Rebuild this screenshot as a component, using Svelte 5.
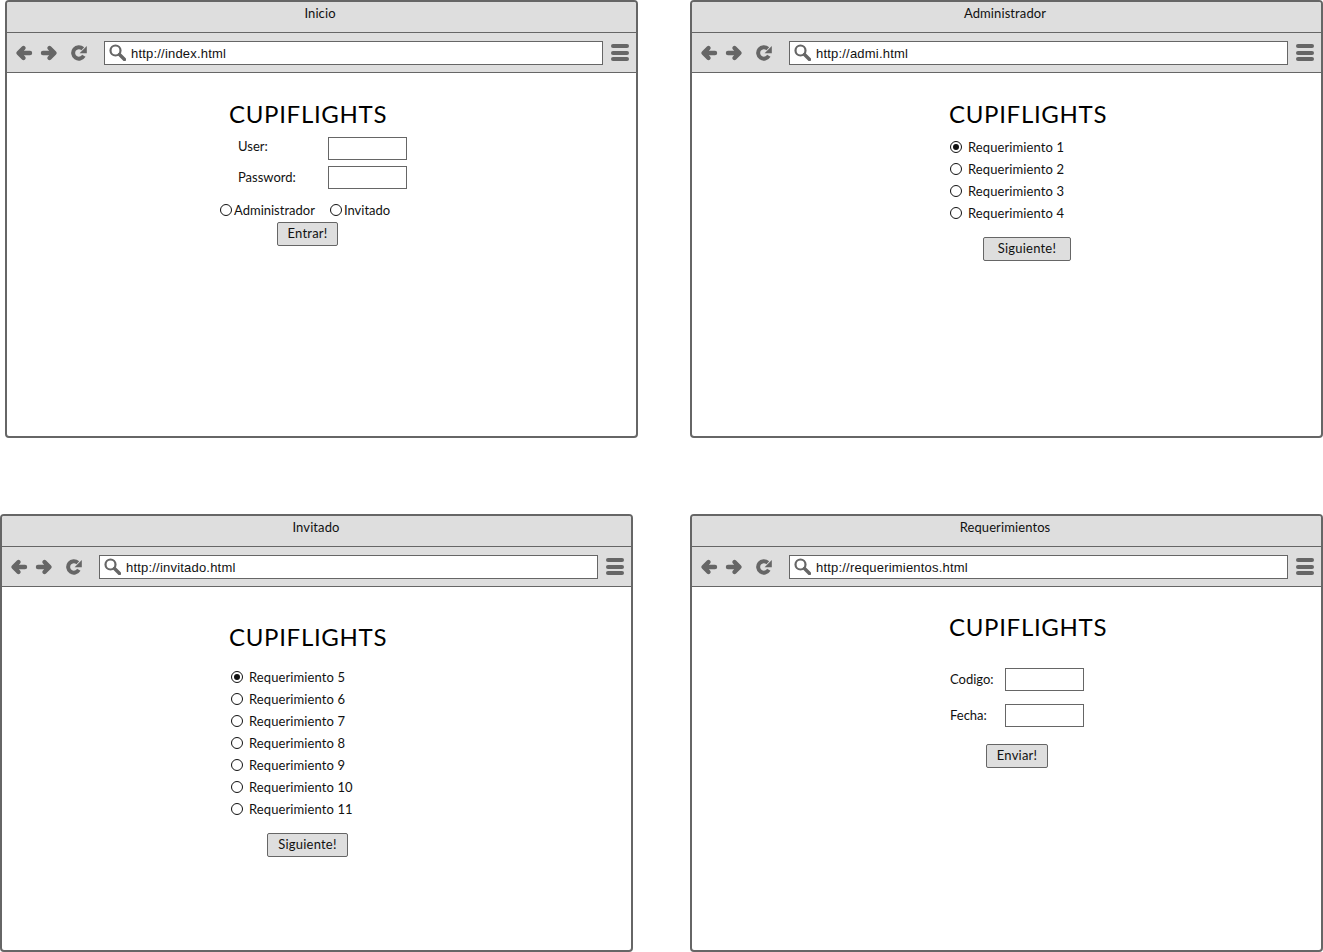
<script>
	const reqsAdmin = [1, 2, 3, 4];
	const reqsGuest = [5, 6, 7, 8, 9, 10, 11];
</script>

{#snippet browser(title, url, cls, body)}
	<section class="window {cls}">
		<header class="titlebar">{title}</header>
		<div class="toolbar">
			<svg class="nav" width="16" height="16" viewBox="0 0 16 16"><path d="M7.5 3 2.500 8l5 5M3 8h11" /></svg>
			<svg class="nav second" width="16" height="16" viewBox="0 0 16 16"><path d="M8.500 3l5 5-5 5M13 8H2" /></svg>
			<svg class="reload" width="16" height="16" viewBox="0 0 16 16">
				<path class="arc" d="M12.800 10.800A5.700 5.700 0 1 1 11.800 3.800" />
				<path class="tip" d="M15.800 1v7.200H8.600z" />
			</svg>
			<div class="address">
				<svg class="search" width="17" height="17" viewBox="0 0 17 17">
					<circle cx="6.500" cy="6.500" r="5" />
					<path d="M10.500 10.500 15.500 15.500" />
				</svg>
				<span>{url}</span>
			</div>
			<div class="menu"><i></i><i></i><i></i></div>
		</div>
		<div class="page">
			{@render body()}
		</div>
	</section>
{/snippet}

{#snippet radio(label, on)}
	<label class="radio">
		<span class="dot" class:on></span>
		<span>{label}</span>
	</label>
{/snippet}

{#snippet inicio()}
	<div class="form login">
		<h1>CUPIFLIGHTS</h1>
		<div class="field first"><span>User:</span><span class="input"></span></div>
		<div class="field second-field"><span>Password:</span><span class="input"></span></div>
		<div class="roles">
			<label class="role"><span class="dot"></span>Administrador</label>
			<label class="role"><span class="dot"></span>Invitado</label>
		</div>
		<button class="enter">Entrar!</button>
	</div>
{/snippet}

{#snippet admin()}
	<div class="form reqs-admin">
		<h1>CUPIFLIGHTS</h1>
		<div class="list">
			{#each reqsAdmin as n, i}
				{@render radio(`Requerimiento ${n}`, i === 0)}
			{/each}
		</div>
		<button class="next">Siguiente!</button>
	</div>
{/snippet}

{#snippet invitado()}
	<div class="form reqs-guest">
		<h1>CUPIFLIGHTS</h1>
		<div class="list">
			{#each reqsGuest as n, i}
				{@render radio(`Requerimiento ${n}`, i === 0)}
			{/each}
		</div>
		<button class="next">Siguiente!</button>
	</div>
{/snippet}

{#snippet requerimientos()}
	<div class="form reqs-form">
		<h1>CUPIFLIGHTS</h1>
		<div class="field"><span>Codigo:</span><span class="input"></span></div>
		<div class="field"><span>Fecha:</span><span class="input"></span></div>
		<button class="send">Enviar!</button>
	</div>
{/snippet}

<main class="board">
	{@render browser('Inicio', 'http://index.html', 'w-inicio', inicio)}
	{@render browser('Administrador', 'http://admi.html', 'w-admin', admin)}
	{@render browser('Invitado', 'http://invitado.html', 'w-guest', invitado)}
	{@render browser('Requerimientos', 'http://requerimientos.html', 'w-reqs', requerimientos)}
</main>

<style>
	:global(body) {
		margin: 0;
		background: #fff;
	}

	.board {
		display: grid;
		grid-template-columns: 638px 633px;
		grid-template-rows: 438px 438px;
		column-gap: 52px;
		row-gap: 76px;
		width: 1323px;
		height: 952px;
		font-family: Lato, "Liberation Sans", sans-serif;
		font-size: 13px;
		color: #111;
	}

	.window {
		box-sizing: border-box;
		display: flex;
		flex-direction: column;
		width: 633px;
		height: 438px;
		border: 2px solid #666;
		border-radius: 4px;
		background: #fff;
		overflow: hidden;
	}

	.w-inicio {
		justify-self: end;
	}

	.titlebar {
		box-sizing: border-box;
		height: 31px;
		padding-top: 4px;
		padding-right: 3px;
		background: #dedede;
		border-bottom: 1px solid #666;
		text-align: center;
		line-height: 15px;
		letter-spacing: 0.1px;
	}

	.w-guest .titlebar {
		padding-right: 1px;
	}

	.toolbar {
		box-sizing: border-box;
		display: flex;
		align-items: center;
		height: 40px;
		padding: 0 7px 0 9px;
		background: #dedede;
		border-bottom: 1px solid #666;
	}

	.nav {
		overflow: visible;
	}

	.nav path {
		fill: none;
		stroke: #666;
		stroke-width: 4.4;
		stroke-linejoin: round;
		stroke-linecap: round;
	}

	.nav.second {
		margin-left: 9px;
	}

	.reload {
		margin-left: 14px;
	}

	.reload .arc {
		fill: none;
		stroke: #666;
		stroke-width: 4;
	}

	.reload .tip {
		fill: #666;
	}

	.address {
		box-sizing: border-box;
		display: flex;
		align-items: center;
		gap: 5px;
		width: 499px;
		height: 24px;
		margin-left: 17px;
		padding-left: 4px;
		background: #fff;
		border: 1px solid #666;
		font-family: "Liberation Sans", Arial, sans-serif;
		letter-spacing: 0.2px;
	}

	.address span {
		padding-top: 1px;
	}

	.search circle,
	.search path {
		fill: none;
		stroke: #666;
	}

	.search circle {
		stroke-width: 2.2;
	}

	.search path {
		stroke-width: 3.4;
		stroke-linecap: round;
	}

	.menu {
		display: flex;
		flex-direction: column;
		gap: 2.5px;
		width: 18px;
		margin-left: 8px;
	}

	.menu i {
		display: block;
		height: 4px;
		border-radius: 2px;
		background: #666;
	}

	.page {
		flex: 1;
		min-height: 0;
	}

	.form {
		display: flex;
		flex-direction: column;
		align-items: flex-start;
	}

	h1 {
		margin: 0;
		font-size: 24px;
		font-weight: 400;
		line-height: 28px;
		letter-spacing: 0.7px;
		color: #000;
		white-space: nowrap;
	}

	.input {
		box-sizing: border-box;
		display: block;
		width: 79px;
		height: 23px;
		background: #fff;
		border: 1px solid #666;
	}

	.field {
		display: flex;
		align-items: center;
		justify-content: space-between;
	}

	.field > span:first-child {
		padding-bottom: 2px;
	}

	.dot {
		box-sizing: border-box;
		position: relative;
		display: block;
		flex: none;
		width: 12px;
		height: 12px;
		border: 1.6px solid #111;
		border-radius: 50%;
		background: #fff;
	}

	.dot.on::after {
		content: "";
		position: absolute;
		inset: 1.7px;
		border-radius: 50%;
		background: #111;
	}

	.radio {
		display: flex;
		align-items: center;
		gap: 6px;
		height: 22px;
		letter-spacing: 0.1px;
	}

	.list {
		display: flex;
		flex-direction: column;
	}

	button {
		box-sizing: border-box;
		height: 24px;
		padding: 0 0 2px;
		background: #dedede;
		border: 1px solid #666;
		border-radius: 2px;
		font: inherit;
		letter-spacing: 0.2px;
		color: #111;
	}

	/* inicio */
	.login {
		padding: 27px 0 0 222px;
	}

	.login .field {
		box-sizing: border-box;
		width: 178px;
		padding-left: 9px;
	}

	.login .first {
		margin-top: 9px;
		align-items: flex-start;
		height: 23px;
	}

	.login .first > span:first-child {
		padding-bottom: 0;
		line-height: 18px;
	}

	.login .second-field {
		margin-top: 6px;
	}

	.roles {
		display: flex;
		gap: 15px;
		margin: 13px 0 0 -9px;
	}

	.role {
		display: flex;
		align-items: center;
		gap: 2px;
		height: 16px;
	}

	.enter {
		width: 61px;
		margin: 4px 0 0 48px;
	}

	/* administrador */
	.reqs-admin {
		padding: 27px 0 0 257px;
	}

	.reqs-admin .list {
		margin: 8px 0 0 1px;
	}

	.reqs-admin .next {
		width: 88px;
		margin: 13px 0 0 34px;
	}

	/* invitado */
	.reqs-guest {
		padding: 36px 0 0 227px;
	}

	.reqs-guest .list {
		margin: 15px 0 0 2px;
	}

	.reqs-guest .next {
		width: 81px;
		margin: 13px 0 0 38px;
	}

	/* requerimientos */
	.reqs-form {
		padding: 26px 0 0 257px;
	}

	.reqs-form .field {
		width: 134px;
		margin-left: 1px;
	}

	.reqs-form .field:nth-of-type(1) {
		margin-top: 27px;
	}

	.reqs-form .field + .field {
		margin-top: 13px;
	}

	.send {
		width: 62px;
		margin: 17px 0 0 37px;
	}
</style>
